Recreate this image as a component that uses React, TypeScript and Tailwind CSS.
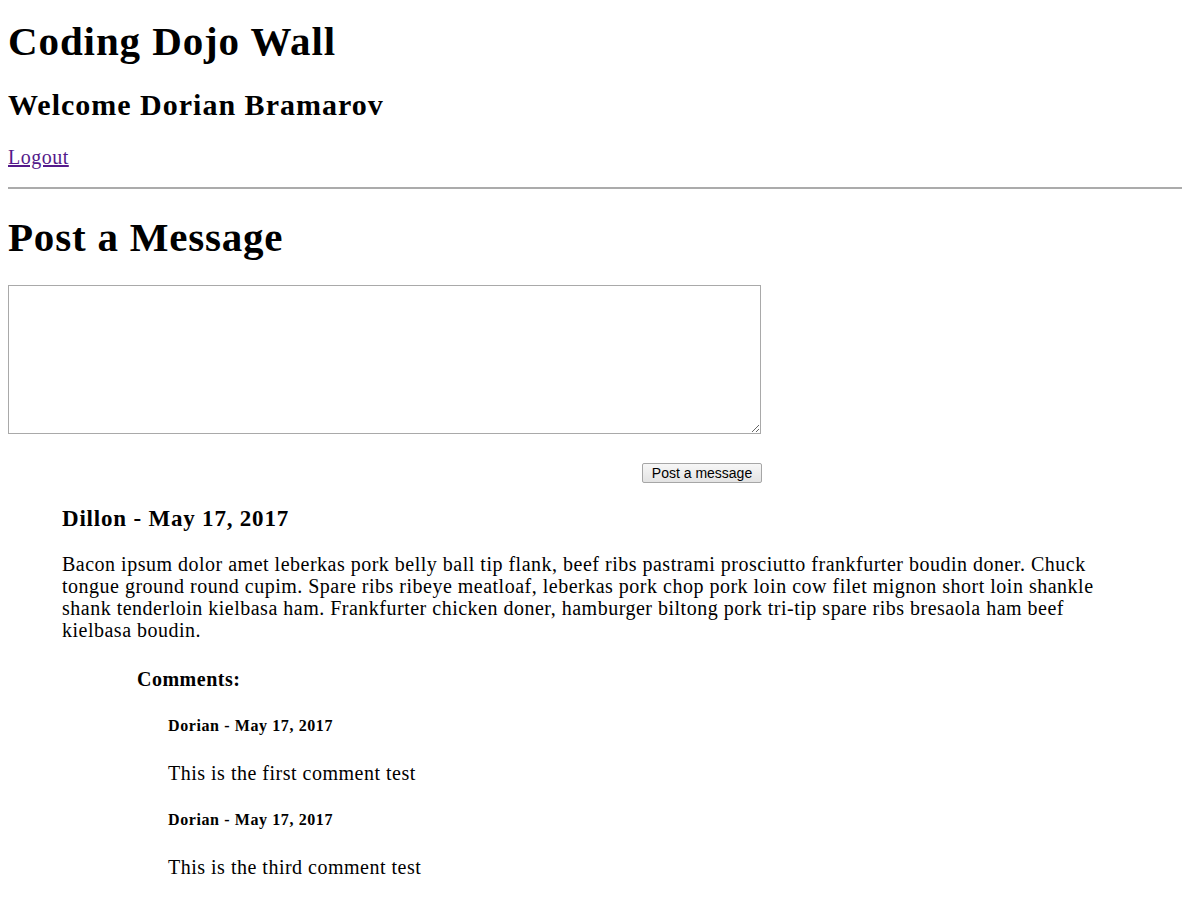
import React from "react";

interface Comment {
  id: number;
  author: string;
  date: string;
  text: string;
}

interface Post {
  id: number;
  author: string;
  date: string;
  body: string;
  comments: Comment[];
}

const posts: Post[] = [
  {
    id: 1,
    author: "Dillon",
    date: "May 17, 2017",
    body:
      "Bacon ipsum dolor amet leberkas pork belly ball tip flank, beef ribs pastrami prosciutto frankfurter boudin doner. Chuck tongue ground round cupim. Spare ribs ribeye meatloaf, leberkas pork chop pork loin cow filet mignon short loin shankle shank tenderloin kielbasa ham. Frankfurter chicken doner, hamburger biltong pork tri-tip spare ribs bresaola ham beef kielbasa boudin.",
    comments: [
      { id: 1, author: "Dorian", date: "May 17, 2017", text: "This is the first comment test" },
      { id: 3, author: "Dorian", date: "May 17, 2017", text: "This is the third comment test" },
    ],
  },
];

const App: React.FC = () => {
  return (
    <div className="min-h-screen bg-white pl-2 pb-8 text-black font-['Liberation_Serif','Times_New_Roman',serif]">
      <h1 className="mt-[17px] text-[41px] leading-[48px] font-bold tracking-[0.9px]">
        Coding Dojo Wall
      </h1>
      <h2 className="mt-[23px] text-[30px] leading-[34px] font-bold tracking-[1px]">
        Welcome Dorian Bramarov
      </h2>
      <div className="mt-[23px] text-[20px] leading-[24px] tracking-[0.5px]">
        <a href="#" className="text-[#551a8b] underline">
          Logout
        </a>
      </div>
      <hr className="mt-[18px] border-0 border-t-2 border-[#ababab]" />

      <h1 className="mt-[24px] text-[41px] leading-[48px] font-bold tracking-[0.8px]">
        Post a Message
      </h1>
      <form className="mt-[24px] flex w-[754px] flex-col items-end">
        <textarea className="block h-[149px] w-[753px] self-start border border-[#a9a9a9] bg-white" />
        <button
          type="button"
          className="mt-[29px] h-[20px] w-[120px] rounded-[2px] border border-[#a6a6a6] bg-gradient-to-b from-[#f7f7f7] to-[#e3e3e3] text-[14px] leading-[18px] font-['Liberation_Sans',Arial,sans-serif]"
        >
          Post a message
        </button>
      </form>

      {posts.map((post) => (
        <div key={post.id} className="ml-[54px] w-[1058px]">
          <h3 className="mt-[22px] text-[23px] leading-[27px] font-bold tracking-[0.8px]">
            {post.author} - {post.date}
          </h3>
          <p className="mt-[21px] text-[20px] leading-[22px] tracking-[0.5px]">{post.body}</p>
          <div className="ml-[75px]">
            <h4 className="mt-[26px] text-[20px] leading-[24px] font-bold tracking-[0.5px]">
              Comments:
            </h4>
            <div className="ml-[31px]">
              {post.comments.map((c) => (
                <div key={c.id}>
                  <h5 className="mt-[25px] text-[16px] leading-[20px] font-bold tracking-[0.6px]">
                    {c.author} - {c.date}
                  </h5>
                  <p className="mt-[25px] text-[20px] leading-[24px] tracking-[0.5px]">{c.text}</p>
                </div>
              ))}
            </div>
          </div>
        </div>
      ))}
    </div>
  );
};

export default App;
